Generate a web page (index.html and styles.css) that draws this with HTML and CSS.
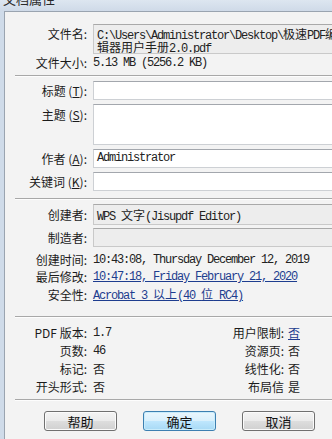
FILE: index.html
```html
<!DOCTYPE html>
<html lang="zh-CN">
<head>
    <meta charset="UTF-8">
    <meta name="viewport" content="width=device-width, initial-scale=1.0">
    <title>文档属性</title>
    <link rel="stylesheet" href="styles.css">
</head>
<body>
<div id="window">
    <div class="titlebar"><span class="title-text">文档属性</span></div>
    <div class="frame">
        <div class="panel">

            <div class="sec sec-file">
                <div class="lbl top">文件名:</div>
                <div class="box ro two">
                    <div class="ln">C:\Users\Administrator\Desktop\<span class="cj">极速</span>PDF<span class="cj">编</span></div>
                    <div class="ln"><span class="cj">辑器用户手册</span>2.0.pdf</div>
                </div>
                <div class="lbl">文件大小:</div>
                <div class="val">5.13 MB (5256.2 KB)</div>
            </div>

            <div class="sep"></div>

            <div class="sec sec-meta">
                <div class="lbl">标题 (<u>T</u>):</div>
                <div class="box"></div>
                <div class="lbl top">主题 (<u>S</u>):</div>
                <div class="box tall"></div>
                <div class="lbl">作者 (<u>A</u>):</div>
                <div class="box">Administrator</div>
                <div class="lbl">关键词 (<u>K</u>):</div>
                <div class="box"></div>
            </div>

            <div class="sep"></div>

            <div class="sec sec-app">
                <div class="lbl">创建者:</div>
                <div class="box ro big">WPS <span class="cj">文字</span>(Jisupdf Editor)</div>
                <div class="lbl">制造者:</div>
                <div class="box ro"></div>
                <div class="lbl line first">创建时间:</div>
                <div class="val line first">10:43:08, Thursday December 12, 2019</div>
                <div class="lbl line">最后修改:</div>
                <div class="val line"><a href="#">10:47:18, Friday February 21, 2020</a></div>
                <div class="lbl line">安全性:</div>
                <div class="val line"><a href="#">Acrobat 3 <span class="cj">以上</span>(40 <span class="cj">位</span> RC4)</a></div>
            </div>

            <div class="sep"></div>

            <div class="sec sec-info">
                <div class="lbl">PDF 版本:</div>
                <div class="val num">1.7</div>
                <div class="lbl">用户限制:</div>
                <div class="val right"><a href="#">否</a></div>

                <div class="lbl">页数:</div>
                <div class="val num">46</div>
                <div class="lbl">资源页:</div>
                <div class="val right">否</div>

                <div class="lbl">标记:</div>
                <div class="val">否</div>
                <div class="lbl">线性化:</div>
                <div class="val right">否</div>

                <div class="lbl">开头形式:</div>
                <div class="val">否</div>
                <div class="lbl">布局信</div>
                <div class="val right">是</div>
            </div>

            <div class="sep"></div>

            <div class="buttons">
                <button class="btn">帮助</button>
                <button class="btn default">确定</button>
                <button class="btn">取消</button>
            </div>
        </div>
    </div>
</div>
</body>
</html>
```

FILE: styles.css
```css
body {
    margin: 0;
    padding: 0;
    width: 332px;
    height: 439px;
    overflow: hidden;
    background: #cfdbe9;
    font-family: "Liberation Mono", "Noto Sans CJK SC", monospace;
    font-size: 12px;
    color: #1b1b1b;
}
#window {
    width: 364px;
}
.titlebar {
    height: 11px;
    overflow: hidden;
    background: linear-gradient(to bottom, #dde6f0, #cfdae8);
}
.title-text {
    display: block;
    margin: -10px 0 0 3px;
    font-family: "Noto Sans CJK SC", sans-serif;
    font-size: 13px;
    line-height: 18px;
    color: #2a2a2a;
}
.frame {
    padding-left: 4px;
    height: 428px;
}
.panel {
    width: 350px;
    height: 428px;
    background: #f3f3f3;
    border-left: 1px solid #9aa4b0;
    border-top: 1px solid #9aa4b0;
    padding-top: 12px;
    box-sizing: border-box;
}

/* label / value grids */
.sec {
    display: grid;
    grid-template-columns: 82px 1fr;
    column-gap: 6px;
    align-items: center;
}
.lbl {
    text-align: right;
    font-family: "Noto Sans CJK SC", sans-serif;
    font-size: 12px;
    line-height: 19px;
    white-space: nowrap;
    color: #1b1b1b;
}
.lbl u {
    text-decoration: underline;
    text-underline-offset: 1px;
}
.lbl.top {
    align-self: start;
}
.val {
    letter-spacing: -1.2px;
    line-height: 14px;
    white-space: nowrap;
    color: #222;
}
.cj {
    letter-spacing: 0;
    font-family: "Noto Sans CJK SC", sans-serif;
}
a {
    color: #1e3d8f;
    text-decoration: underline;
}

.box {
    height: 19px;
    box-sizing: border-box;
    background: #fff;
    border: 1px solid #cdd0d4;
    border-top-color: #a3a7ad;
    padding: 0 3px;
    line-height: 17px;
    letter-spacing: -1.2px;
    white-space: nowrap;
    overflow: hidden;
    color: #222;
}
.box.ro {
    background: #ededed;
    border-color: #c9c9c9;
    border-top-color: #a9a9a9;
}
.box.two {
    height: 30px;
    padding: 2px 3px 0;
}
.ln {
    height: 13px;
    line-height: 13px;
}
.box.big {
    height: 21px;
    line-height: 19px;
}
.box.tall {
    height: 41px;
}

.sec-file {
    row-gap: 2px;
}
.sec-file .lbl {
    line-height: 14px;
}
.sec-file .lbl.top {
    line-height: 12px;
    padding-top: 4px;
}
.sec-meta {
    margin-top: 4px;
    row-gap: 4px;
}
.sec-meta .lbl.top {
    padding-top: 1px;
}
.sec-app {
    margin-top: 4px;
    row-gap: 3px;
}
.sec-app .line {
    line-height: 14px;
}
.sec-app .line.first {
    margin-top: 3px;
}

.sec-info {
    grid-template-columns: 82px 108px 89px auto;
    column-gap: 0;
    grid-auto-rows: 18px;
    margin-top: 6px;
}
.sec-info .lbl {
    line-height: 18px;
}
.sec-info .val {
    padding-left: 6px;
    line-height: 18px;
    font-family: "Noto Sans CJK SC", sans-serif;
    letter-spacing: 0;
}
.sec-info .val.right {
    padding-left: 4px;
}
.sec-info .val.num {
    font-family: "Liberation Mono", monospace;
    letter-spacing: -1.2px;
}

.sep {
    height: 0;
    margin-left: 10px;
    border-top: 1px solid #a8a8a8;
    border-bottom: 1px solid #fdfdfd;
}
.sec-file + .sep {
    margin-top: 5px;
}
.sec-meta + .sep {
    margin-top: 7px;
}
.sec-app + .sep {
    margin-top: 13px;
}
.sec-info + .sep {
    margin-top: 3px;
}

.buttons {
    display: flex;
    justify-content: center;
    gap: 26px;
    margin-top: 10px;
}
.btn {
    width: 73px;
    height: 20px;
    padding: 0;
    border: 1px solid #707070;
    border-radius: 3px;
    background: linear-gradient(to bottom, #f4f4f4 0%, #ebebeb 48%, #dddddd 52%, #d0d0d0 100%);
    box-shadow: inset 0 0 0 1px #fbfbfb;
    font-family: "Noto Sans CJK SC", sans-serif;
    font-size: 13px;
    line-height: 17px;
    color: #111;
}
.btn.default {
    border-color: #3c7fb1;
    background: linear-gradient(to bottom, #eaf6fd 0%, #d9f0fc 48%, #bee6fd 52%, #a7d9f5 100%);
    box-shadow: inset 0 0 0 1px #c9ecfb;
}
```
